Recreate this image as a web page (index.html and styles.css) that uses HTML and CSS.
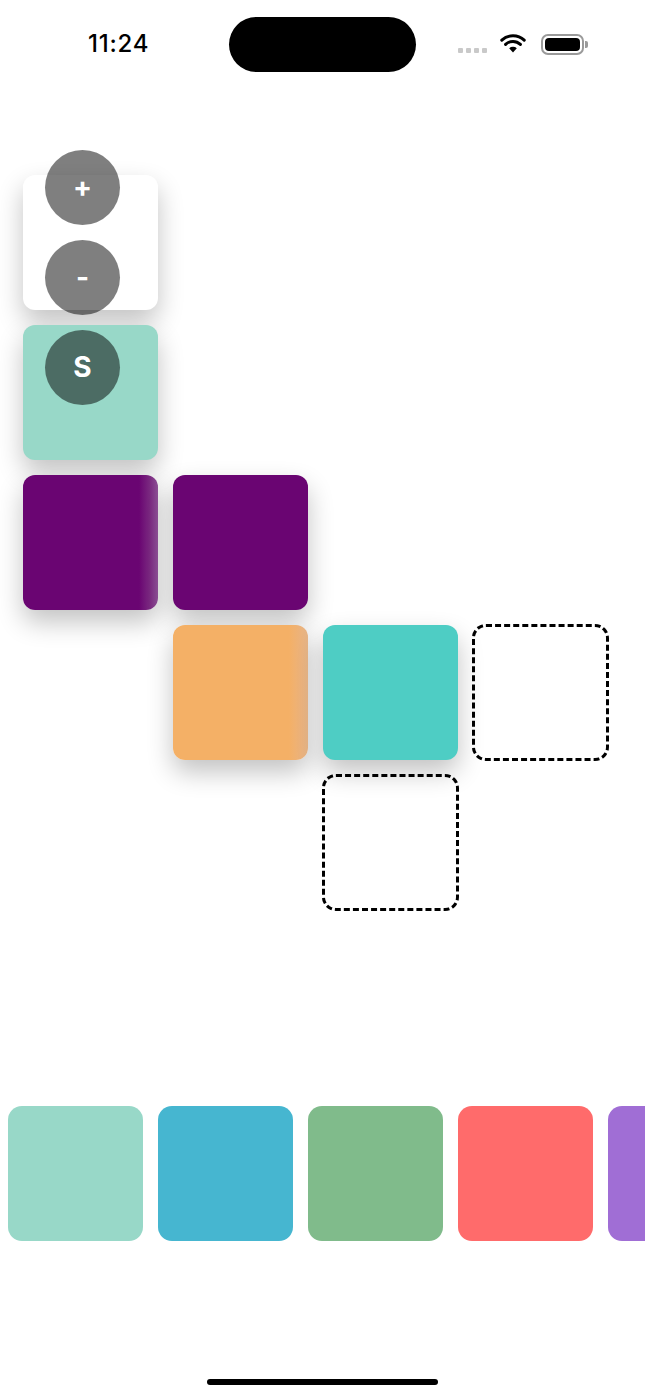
FILE: index.html
```html
<!DOCTYPE html>
<html>
<head>
<meta charset="utf-8">
<link rel="stylesheet" href="styles.css">
</head>
<body>
<div class="screen">
  <header class="statusbar">
    <div class="time">11:24</div>
    <div class="island"></div>
    <div class="status-icons">
      <div class="signal"><span></span><span></span><span></span><span></span></div>
      <svg class="wifi" width="26" height="19" viewBox="0 0 26 19">
        <path d="M13 18.5 L9.2 14.2 A5.6 5.6 0 0 1 16.8 14.2 Z" fill="#000"/>
        <path d="M5.6 10.4 A10.6 10.6 0 0 1 20.4 10.4" fill="none" stroke="#000" stroke-width="3" stroke-linecap="round"/>
        <path d="M1.8 6.2 A16.2 16.2 0 0 1 24.2 6.2" fill="none" stroke="#000" stroke-width="3" stroke-linecap="round"/>
      </svg>
      <div class="battery"><div class="battery-body"><div class="battery-fill"></div></div><div class="battery-cap"></div></div>
    </div>
  </header>

  <main class="board-wrap">
    <div class="board">
      <div class="tile card r1 c1"></div>
      <div class="tile mint r2 c1"></div>
      <div class="tile purple edge-purple r3 c1"></div>
      <div class="tile purple r3 c2"></div>
      <div class="tile orange r4 c2"></div>
      <div class="tile teal r4 c3"></div>
      <div class="slot r4 c4"></div>
      <div class="slot r5 c3"></div>
    </div>
    <div class="controls">
      <button class="ctrl">+</button>
      <button class="ctrl">-</button>
      <button class="ctrl">S</button>
    </div>
  </main>

  <section class="palette">
    <div class="swatch" style="background:#98d8c8"></div>
    <div class="swatch" style="background:#46b6d0"></div>
    <div class="swatch" style="background:#80bb8b"></div>
    <div class="swatch" style="background:#ff6b6b"></div>
    <div class="swatch" style="background:#a06ed5"></div>
  </section>

  <div class="home-indicator"></div>
</div>
</body>
</html>
```

FILE: styles.css
```css
* { box-sizing: border-box; }
html, body { margin: 0; padding: 0; background: #fff; }
body { font-family: Inter, "Noto Sans", sans-serif; }

.screen {
  width: 645px;
  height: 1398px;
  overflow: hidden;
  display: flex;
  flex-direction: column;
}

/* status bar */
.statusbar {
  height: 88px;
  display: flex;
  align-items: flex-start;
  position: relative;
}
.time {
  margin-left: 88px;
  margin-top: 29px;
  width: 70px;
  font-size: 24px;
  font-weight: 500;
  line-height: 29px;
  letter-spacing: 0.8px;
  color: #000;
}
.island {
  margin-left: 71px;
  margin-top: 17px;
  width: 187px;
  height: 55px;
  border-radius: 28px;
  background: #000;
}
.status-icons {
  margin-left: 42px;
  margin-top: 32px;
  display: flex;
  align-items: center;
  height: 24px;
}
.signal { display: flex; gap: 3px; margin-top: 12px; margin-right: 13px; }
.signal span { width: 5px; height: 5px; border-radius: 1px; background: #c9c9c9; }
.wifi { margin-right: 15px; margin-top: -2px; }
.battery { display: flex; align-items: center; }
.battery-body {
  width: 43px;
  height: 21px;
  border: 2px solid #9a9a9a;
  border-radius: 7px;
  padding: 2px;
}
.battery-fill { width: 100%; height: 100%; background: #000; border-radius: 4px; }
.battery-cap { width: 3px; height: 7px; background: #9a9a9a; border-radius: 0 2px 2px 0; margin-left: 1px; }

/* board */
.board-wrap {
  position: relative;
  padding-top: 87px;
  height: 1018px;
}
.board {
  display: grid;
  grid-template-columns: repeat(4, 135px);
  grid-auto-rows: 135px;
  gap: 15px;
  padding-left: 23px;
}
.tile { border-radius: 12px; box-shadow: 0 12px 26px rgba(0,0,0,0.24); }
.card { background: #fff; }
.mint { background: #98d8c8; }
.purple { background: #6a0572; }
.edge-purple { background: linear-gradient(to right, #6a0572 86%, #7a2a80 94%, #8e5096 100%); }
.orange { background: linear-gradient(to right, #f4b066 86%, #ecb27a 94%, #e6b588 100%); }
.teal { background: #4ecdc4; }
.slot { border: 3px dashed #000; border-radius: 14px; margin: -1px; }

.r1 { grid-row: 1; } .r2 { grid-row: 2; } .r3 { grid-row: 3; } .r4 { grid-row: 4; } .r5 { grid-row: 5; }
.c1 { grid-column: 1; } .c2 { grid-column: 2; } .c3 { grid-column: 3; } .c4 { grid-column: 4; }

.controls {
  position: absolute;
  left: 45px;
  top: 62px;
  display: flex;
  flex-direction: column;
  gap: 15px;
}
.ctrl {
  width: 75px;
  height: 75px;
  border-radius: 50%;
  border: none;
  padding: 0;
  background: rgba(0,0,0,0.5);
  color: #fff;
  font-family: Inter, "Noto Sans", sans-serif;
  font-size: 28px;
  font-weight: 700;
  line-height: 75px;
  text-align: center;
}

/* palette */
.palette {
  display: flex;
  gap: 15px;
  padding-left: 8px;
  height: 135px;
}
.swatch {
  flex: 0 0 135px;
  height: 135px;
  border-radius: 14px;
}

.home-indicator {
  width: 231px;
  height: 6px;
  border-radius: 3px;
  background: #000;
  margin: 138px auto 0;
}
```
